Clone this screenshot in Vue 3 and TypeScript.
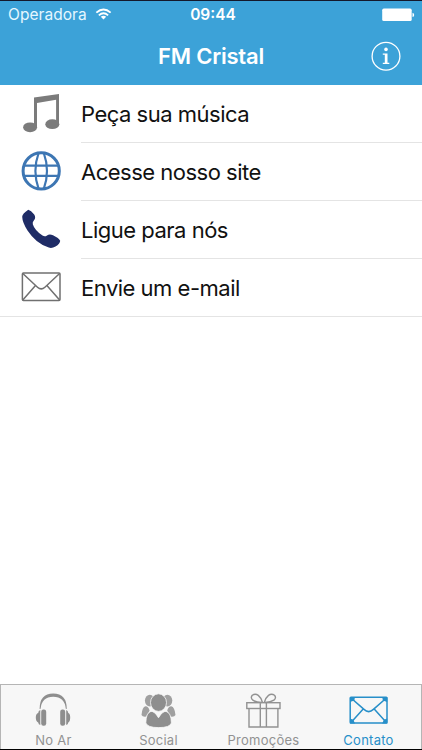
<script setup lang="ts">
interface Row { id: string; label: string }
interface Tab { id: string; label: string; active?: boolean }

const rows: Row[] = [
  { id: 'music', label: 'Peça sua música' },
  { id: 'site', label: 'Acesse nosso site' },
  { id: 'phone', label: 'Ligue para nós' },
  { id: 'mail', label: 'Envie um e-mail' },
]

const tabs: Tab[] = [
  { id: 'air', label: 'No Ar' },
  { id: 'social', label: 'Social' },
  { id: 'promo', label: 'Promoções' },
  { id: 'contact', label: 'Contato', active: true },
]
</script>

<template>
  <div class="screen">
    <header class="top">
      <div class="status">
        <div class="carrier">
          <span>Operadora</span>
          <svg class="wifi" width="17" height="13" viewBox="0 0 18 14" fill="none" stroke="#fff" stroke-width="2">
            <path d="M1.3 5Q9-1.9 16.7 5" />
            <path d="M4 7.9Q9 3.4 14 7.9" />
            <path d="M9 12.4L6.1 9.5Q9 7.2 11.9 9.5Z" fill="#fff" stroke="none" />
          </svg>
        </div>
        <span class="time">09:44</span>
        <svg class="battery" width="33" height="14" viewBox="0 0 33 14" fill="#fff">
          <rect x="0.2" y="0.6" width="29.5" height="12.4" rx="1.6" />
          <path d="M30.5 4.8Q32.2 5.2 32.2 6.9T30.5 9Z" />
        </svg>
      </div>
      <div class="nav">
        <h1>FM Cristal</h1>
        <svg class="info" width="32" height="32" viewBox="0 0 32 32" fill="none" stroke="#fff">
          <circle cx="16" cy="15.2" r="13.9" stroke-width="1.3" />
          <circle cx="16" cy="8.4" r="1.8" fill="#fff" stroke="none" />
          <path d="M12.8 12.5H17.5V21.7H19.3V22.9H12.8V21.7H14.8V13.7H12.8Z" fill="#fff" stroke="none" />
        </svg>
      </div>
    </header>

    <main>
      <div v-for="row in rows" :key="row.id" class="row" :class="row.id">
        <svg v-if="row.id === 'music'" width="81" height="58" viewBox="0 0 81 58" fill="#7b7b7b">
          <path d="M34 12.6L59 9V39H56.1V14.8L37 18V42.3H34Z" />
          <ellipse cx="30.1" cy="42.3" rx="7" ry="4.9" />
          <ellipse cx="52.3" cy="39.2" rx="7" ry="4.9" />
        </svg>
        <svg v-else-if="row.id === 'site'" width="81" height="58" viewBox="0 0 81 58" fill="none" stroke="#3d76b3" stroke-width="2.2">
          <circle cx="41.2" cy="27.9" r="18.1" stroke-width="3" />
          <path d="M38.6 10Q32.2 27.9 38.6 45.8M43.8 10Q50.2 27.9 43.8 45.8" />
          <path d="M23.5 22.7H59M23.5 32.8H59" />
        </svg>
        <svg v-else-if="row.id === 'phone'" width="81" height="58" viewBox="0 0 81 58" fill="#1f2c66">
          <path d="M28.3 8.8Q31 9.4 34.2 13.4Q36.2 16.4 34 19.2Q32.2 21 32.8 23.2Q34.5 29 42.5 34.6Q45 36 47 34.4Q49.5 32.6 53 34.2Q59 37 60.2 39.8Q60 43 55.5 45.5Q52 47.6 48.8 46.6Q36 42.6 27.5 29.5Q22.4 21.5 22.2 15.8Q22.2 12.8 28.3 8.8Z" />
        </svg>
        <svg v-else width="81" height="58" viewBox="0 0 81 58" fill="none" stroke="#707070" stroke-width="1.5">
          <rect x="22.4" y="14.1" width="37.6" height="27.3" rx="1" />
          <path d="M22.8 14.5L37.5 28.2Q41.2 31.5 44.9 28.2L59.6 14.5M22.8 41L35.5 26.5M59.6 41L46.9 26.5" />
        </svg>
        <div class="label"><span>{{ row.label }}</span></div>
      </div>
    </main>

    <nav class="tabs">
      <div v-for="tab in tabs" :key="tab.id" class="tab" :class="[tab.id, { active: tab.active }]">
        <svg v-if="tab.id === 'air'" width="44" height="44" viewBox="0 0 44 44" fill="#8e8e8e">
          <path d="M7.6 24Q7.6 8.4 21.2 8.4T34.8 24L33.8 23.8Q32.6 11.8 21.2 11.8T8.6 23.8Z" />
          <rect x="9.2" y="24.5" width="5" height="16.3" rx="2.2" />
          <rect x="28.2" y="24.5" width="5" height="16.3" rx="2.2" />
          <path d="M8.3 25V40Q6.5 39.5 6.2 37.5Q3.8 36.5 3.8 32.6T6.2 28Q6.4 25.6 8.3 25ZM34.2 25V40Q36 39.5 36.3 37.5Q38.2 36.5 38.2 32.6T36.3 28Q36 25.6 34.2 25Z" />
        </svg>
        <svg v-else-if="tab.id === 'social'" width="44" height="44" viewBox="0 0 44 44" fill="#8e8e8e">
          <g fill="#a0a0a0">
            <ellipse cx="12.8" cy="15.6" rx="4.9" ry="5.8" /><ellipse cx="30.4" cy="15.6" rx="4.9" ry="5.8" />
            <path d="M8.5 21.3Q11.6 21.2 12.6 25.8L9.2 31.6Q5.6 32.2 4.5 30Q5.2 21.8 8.5 21.3ZM34.3 21.3Q31.2 21.2 30.2 25.8L33.6 31.6Q37.4 32.2 38.5 30Q37.6 21.8 34.3 21.3Z" />
          </g>
          <g stroke="#f7f7f7" stroke-width="0.8">
            <ellipse cx="21.5" cy="17.6" rx="8" ry="8.8" />
            <path d="M8.8 38Q9 27.5 14 26.4Q17.5 26 21.5 32.8Q25.5 26 29 26.4Q34.2 27.5 34.4 38Q33 42.6 21.7 42.6T8.8 38Z" />
          </g>
        </svg>
        <svg v-else-if="tab.id === 'promo'" width="44" height="44" viewBox="0 0 44 44" fill="none" stroke="#929292" stroke-width="1.4">
          <rect x="4.8" y="17.7" width="33.2" height="5.8" />
          <path d="M7 23.5V42H35.9V23.5M18.3 17.7V42M24.4 17.7V42M19.5 17.5Q14.3 17.4 10.9 15.2Q8.1 12.8 10.3 10.3Q13.3 8.2 16.3 10.4Q19.3 12.8 20.5 17.5M23.3 17.5Q28.5 17.4 31.9 15.2Q34.7 12.8 32.5 10.3Q29.5 8.2 26.5 10.4Q23.5 12.8 22.3 17.5" />
        </svg>
        <svg v-else width="44" height="44" viewBox="0 0 44 44" fill="none" stroke="#278fc9" stroke-width="1.5">
          <rect x="3.2" y="12.3" width="36.8" height="25.7" rx="0.8" />
          <path d="M4 13L17 24.4Q21.6 28.8 26.4 24.4L39.4 13M4 37.6L16.2 24M39.4 37.6L27.2 24" />
          <path d="M3 12H8L7.3 15.5L3 17ZM40.2 12H35.2L35.9 15.5L40.2 17ZM3 38.4V33.6L6.3 34.8L8 38.4ZM40.2 38.4V33.6L36.9 34.8L35.2 38.4Z" fill="#278fc9" stroke="none" />
        </svg>
        <span class="tab-label">{{ tab.label }}</span>
      </div>
    </nav>
  </div>
</template>

<style>
body { background: #fff; }
</style>

<style scoped>
.screen {
  box-sizing: border-box;
  width: 422px;
  height: 750px;
  display: flex;
  flex-direction: column;
  border-top: 1px solid #14182b;
  border-bottom: 1px solid #000;
  font-family: Inter, "Liberation Sans", sans-serif;
  overflow: hidden;
}
.top { height: 84px; background: #3ca2d8; color: #fff; flex: none; }
.status { height: 27px; display: grid; grid-template-columns: 1fr 60px 1fr; align-items: center; }
.carrier { display: flex; align-items: center; gap: 8px; padding-left: 8px; font-size: 15.5px; color: #e5f7ff; letter-spacing: 0.05px; }
.time { text-align: center; font-size: 15.5px; font-weight: 600; padding-left: 4px; }
.battery { justify-self: end; margin-right: 7px; }
.nav { height: 57px; display: grid; grid-template-columns: 52px 1fr 52px; align-items: center; }
h1 { grid-column: 2; margin: 0 0 2px; text-align: center; font-size: 22px; line-height: 28px; font-weight: 600; letter-spacing: -0.2px; }
.info { display: block; }
main { flex: 1; }
.row { height: 58px; display: flex; box-sizing: border-box; }
.row svg { flex: none; }
.label { flex: 1; box-sizing: border-box; height: 58px; border-bottom: 1px solid #e4e4e4; display: flex; align-items: center; font-size: 22px; letter-spacing: -0.5px; color: #111; white-space: nowrap; }
.mail { border-bottom: 1px solid #e4e4e4; }
.mail .label { border-bottom: 0; height: 57px; }
.tabs { box-sizing: border-box; height: 65px; border: 1px solid #b5b5b5; border-bottom: 0; background: #f7f7f7; display: grid; grid-template-columns: repeat(4, 105px); }
.tab { height: 64px; display: flex; flex-direction: column; align-items: center; color: #929292; }
.tab svg { flex: none; }
.tab-label { font-size: 13px; line-height: 16px; letter-spacing: 0.25px; margin-top: 3px; }
.active { color: #278fc9; }
</style>
